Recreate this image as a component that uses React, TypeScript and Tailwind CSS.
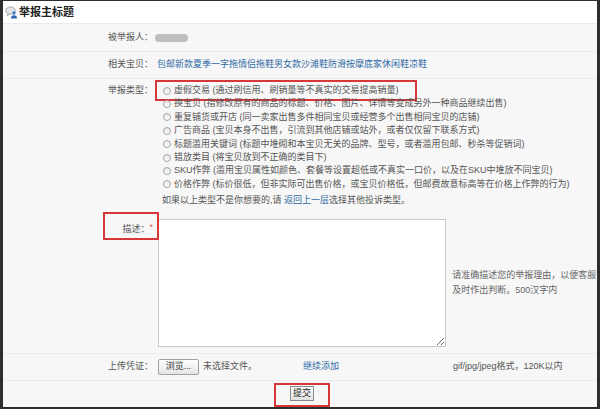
import React from 'react';

const options = [
  '虚假交易 (通过刷信用、刷销量等不真实的交易提高销量)',
  '换宝贝 (指修改原有的商品的标题、价格、图片、详情等变成另外一种商品继续出售)',
  '重复铺货或开店 (同一卖家出售多件相同宝贝或经营多个出售相同宝贝的店铺)',
  '广告商品 (宝贝本身不出售，引流到其他店铺或站外，或者仅仅留下联系方式)',
  '标题滥用关键词 (标题中堆砌和本宝贝无关的品牌、型号，或者滥用包邮、秒杀等促销词)',
  '错放类目 (将宝贝放到不正确的类目下)',
  'SKU作弊 (滥用宝贝属性如颜色、套餐等设置超低或不真实一口价，以及在SKU中堆放不同宝贝)',
  '价格作弊 (标价很低，但非实际可出售价格，或宝贝价格低，但邮费故意标高等在价格上作弊的行为)',
];

function HeaderIcon() {
  return (
    <svg width="13" height="13" viewBox="0 0 13 13" className="shrink-0">
      <ellipse cx="5.5" cy="4.5" rx="4.8" ry="3.6" fill="#e4e4e4" stroke="#9a9a9a" strokeWidth="0.8" />
      <path d="M3 7.5 L2.2 10 L5 8" fill="#e4e4e4" stroke="#9a9a9a" strokeWidth="0.7" />
      <circle cx="9" cy="7" r="1.7" fill="#3a78c9" />
      <path d="M6 12.5 Q6 9.2 9 9.2 Q12 9.2 12 12.5 Z" fill="#2f64b0" />
    </svg>
  );
}

function Label({ children }: { children: React.ReactNode }) {
  return <div className="w-[150px] shrink-0 text-right text-[#555]">{children}</div>;
}

function Radio() {
  return (
    <span className="ml-[6px] inline-block h-[8px] w-[8px] shrink-0 rounded-full border border-[#a5a5a5] bg-gradient-to-b from-[#e6e6e6] to-white" />
  );
}

export default function App() {
  return (
    <div className="h-[409px] w-[600px] bg-[#2e2e2e] pb-[2px] pl-[3px] pr-[3px] pt-px font-['Arial','Liberation_Sans','Noto_Sans_CJK_SC',sans-serif] text-[9px] text-[#555]">
      <div className="flex h-full flex-col bg-[#f7f7f7]">
        <div className="flex h-[23px] items-center gap-px border-b border-[#ebebeb] bg-white pl-[2px]">
          <HeaderIcon />
          <h1 className="text-[11px] font-bold leading-none text-[#222]">举报主标题</h1>
        </div>

        <div className="flex h-[28px] items-center border-b border-[#ececec]">
          <Label>被举报人：</Label>
          <span className="ml-[2px] inline-block h-[8px] w-[33px] rounded-full bg-[#bdbdbd]" />
        </div>

        <div className="flex h-[27px] items-center border-b border-[#ececec]">
          <Label>相关宝贝：</Label>
          <a className="ml-[4px] text-[#2f6aa6]">包邮新款夏季一字拖情侣拖鞋男女款沙滩鞋防滑按摩底家休闲鞋凉鞋</a>
        </div>

        <div className="flex items-start pt-[5px] leading-[13.4px]">
          <Label>举报类型：</Label>
          <div className="ml-[4px] flex flex-col">
            {options.map((text, i) => (
              <div key={i} className="relative flex h-[13.4px] items-center whitespace-nowrap">
                <Radio />
                <span className="ml-[3px]">{text}</span>
                {i === 0 && (
                  <span className="absolute -left-[2px] -top-[4px] h-[21px] w-[262px] border-2 border-[#d6383a]" />
                )}
              </div>
            ))}
            <div className="mt-[3px] pl-[5px]">
              如果以上类型不是你想要的,请 <a className="text-[#2f6aa6]">返回上一层</a>选择其他投诉类型。
            </div>
          </div>
        </div>

        <div className="flex items-start border-b border-[#ececec] pb-[6px] pt-[11px]">
          <div className="relative w-[150px] shrink-0 pt-[4px] text-right leading-[12px] text-[#555]">
            描述：<span className="relative -top-[2px] text-[#e0562e]">*</span>
            <span className="absolute -top-[7px] left-[100px] h-[28px] w-[56px] border-2 border-[#d6383a]" />
          </div>
          <textarea
            readOnly
            className="ml-[5px] h-[128px] w-[289px] border border-[#c8c8c8] bg-white outline-none"
          />
          <div className="ml-[6px] w-[145px] self-center leading-[15px] text-[#666]">
            请准确描述您的举报理由，以便客服及时作出判断。500汉字内
          </div>
        </div>

        <div className="flex h-[27px] items-center border-b border-[#ececec]">
          <Label>上传凭证：</Label>
          <div className="ml-[5px] flex w-[145px] items-center">
            <span className="flex h-[16px] w-[41px] items-center justify-center rounded-[2px] border border-[#a0a0a0] bg-gradient-to-b from-white to-[#e4e4e4] text-[#333]">
              浏览...
            </span>
            <span className="ml-[4px]">未选择文件。</span>
          </div>
          <a className="w-[150px] text-[#2f6aa6]">继续添加</a>
          <span>gif/jpg/jpeg格式，120K以内</span>
        </div>

        <div className="flex flex-1 items-center justify-center">
          <div className="relative ml-[4px]">
            <button className="flex h-[15px] w-[24px] items-center justify-center border border-[#8a8a8a] bg-gradient-to-b from-white to-[#e2e2e2] text-[9px] text-[#222]">
              提交
            </button>
            <span className="absolute -left-[16px] -top-[3px] h-[24px] w-[56px] border-2 border-[#d6383a]" />
          </div>
        </div>
      </div>
    </div>
  );
}
